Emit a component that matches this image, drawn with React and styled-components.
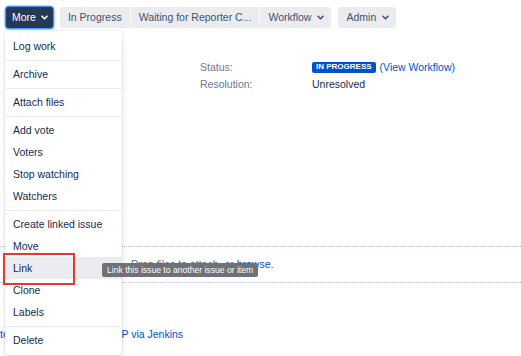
import React from "react";
import styled, { createGlobalStyle, css } from "styled-components";

const Global = createGlobalStyle`
  html, body { margin: 0; padding: 0; background: #fff; }
  body {
    font-family: "Liberation Sans", Arial, sans-serif;
    font-size: 10.5px;
    color: #172B4D;
    overflow: hidden;
  }
`;

const Page = styled.div`
  position: relative;
  width: 521px;
  height: 356px;
  overflow: hidden;
  background: #fff;
`;

const Toolbar = styled.div`
  display: flex;
  align-items: center;
  gap: 7px;
  padding: 7px 0 0 6px;
`;

const ButtonGroup = styled.div`
  display: flex;
  gap: 1px;
`;

const Button = styled.button`
  display: inline-flex;
  align-items: center;
  gap: 6px;
  height: 21px;
  padding: 0 7px 0 8px;
  border: 0;
  border-radius: 3px;
  background: #EBECF0;
  color: #42526E;
  font-family: "Liberation Sans", Arial, sans-serif;
  font-size: 10.5px;
  line-height: 21px;
  white-space: nowrap;
  ${(p) => p.$plain && css`padding: 0 8px;`}
  ${(p) => p.$pos === "first" && css`border-radius: 3px 0 0 3px;`}
  ${(p) => p.$pos === "middle" && css`border-radius: 0;`}
  ${(p) => p.$pos === "last" && css`border-radius: 0 3px 3px 0;`}
  ${(p) =>
    p.$primary &&
    css`
      background: #253858;
      color: #fff;
      gap: 5px;
      padding: 0 5px 0 6px;
      box-shadow: 0 0 0 1.5px #4C9AFF;
    `}
`;

const Chevron = () => (
  <svg width="7" height="5" viewBox="0 0 7 5" aria-hidden="true">
    <path d="M1 1.2 L3.5 3.7 L6 1.2" fill="none" stroke="currentColor" strokeWidth="1.6" strokeLinecap="round" strokeLinejoin="round" />
  </svg>
);

const Details = styled.div`
  display: grid;
  grid-template-columns: 112px auto;
  grid-auto-rows: 17.8px;
  align-items: center;
  margin: 30.6px 0 0 200px;
  line-height: 17.8px;
`;

const Label = styled.div`
  color: #6B778C;
`;

const Value = styled.div`
  display: flex;
  align-items: center;
  color: #172B4D;
`;

const Lozenge = styled.span`
  display: inline-block;
  height: 10.5px;
  line-height: 10.5px;
  padding: 0 4px;
  border-radius: 2px;
  background: #0052CC;
  color: #fff;
  font-size: 8px;
  font-weight: 700;
  text-transform: uppercase;
`;

const Link = styled.a`
  color: #0052CC;
  text-decoration: none;
  ${(p) => p.$gap && css`margin-left: 4px;`}
`;

const DropZone = styled.div`
  margin-top: 151.8px;
  border-top: 1px dotted #B3BAC5;
  border-bottom: 1px dotted #B3BAC5;
  padding: 10.5px 0 10.5px 131px;
  line-height: 14px;
  color: #5E6C84;
  white-space: nowrap;
`;

const Footer = styled.div`
  margin-top: 44px;
  line-height: 14px;
  white-space: nowrap;
`;

const Menu = styled.div`
  position: absolute;
  left: 5px;
  top: 31px;
  width: 117px;
  padding: 1.5px 0;
  background: #fff;
  border-radius: 3px;
  box-shadow: 0 3px 7px -2px rgba(9, 30, 66, 0.25), 0 0 1px rgba(9, 30, 66, 0.31);
`;

const MenuGroup = styled.div`
  padding: 2.5px 0;
  & + & {
    border-top: 1px solid #EBECF0;
  }
`;

const MenuItem = styled.div`
  height: 22px;
  line-height: 22px;
  padding: 0 8px;
  color: #172B4D;
  white-space: nowrap;
  ${(p) => p.$active && css`background: #EBECF0;`}
`;

const Highlight = styled.div`
  position: absolute;
  left: 3px;
  top: 253px;
  width: 72px;
  height: 32px;
  box-sizing: border-box;
  border: 2px solid #E8372C;
  pointer-events: none;
`;

const Tooltip = styled.div`
  position: absolute;
  left: 102px;
  top: 263px;
  height: 14px;
  padding: 0 5px;
  border-radius: 2px;
  background: #6E7176;
  color: #fff;
  font-size: 8.6px;
  line-height: 14px;
  white-space: nowrap;
`;

const groups = [
  ["Log work"],
  ["Archive"],
  ["Attach files"],
  ["Add vote", "Voters", "Stop watching", "Watchers"],
  ["Create linked issue", "Move", "Link", "Clone", "Labels"],
  ["Delete"],
];

export default function App() {
  return (
    <Page>
      <Global />
      <Toolbar>
        <Button $primary>
          More <Chevron />
        </Button>
        <ButtonGroup>
          <Button $plain $pos="first">In Progress</Button>
          <Button $plain $pos="middle">Waiting for Reporter C...</Button>
          <Button $pos="last">
            Workflow <Chevron />
          </Button>
        </ButtonGroup>
        <Button>
          Admin <Chevron />
        </Button>
      </Toolbar>

      <Details>
        <Label>Status:</Label>
        <Value>
          <Lozenge>In Progress</Lozenge>
          <Link $gap href="#">(View Workflow)</Link>
        </Value>
        <Label>Resolution:</Label>
        <Value>Unresolved</Value>
      </Details>

      <DropZone>
        Drop files to attach, or <Link href="#">browse.</Link>
      </DropZone>

      <Footer>
        <Link href="#">test builds deployed to ESP via Jenkins</Link>
      </Footer>

      <Menu>
        {groups.map((g, i) => (
          <MenuGroup key={i}>
            {g.map((item) => (
              <MenuItem key={item} $active={item === "Link"}>
                {item}
              </MenuItem>
            ))}
          </MenuGroup>
        ))}
      </Menu>
      <Highlight />
      <Tooltip>Link this issue to another issue or item</Tooltip>
    </Page>
  );
}
